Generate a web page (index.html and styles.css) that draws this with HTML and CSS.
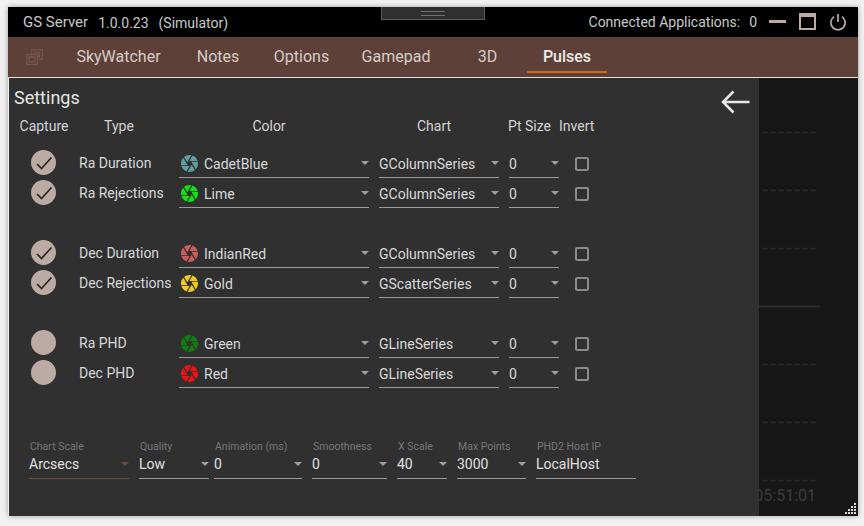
FILE: index.html
```html
<!DOCTYPE html>
<html lang="en">
<head>
  <meta charset="UTF-8">
  <title>GS Server</title>
  <link rel="stylesheet" href="styles.css">
</head>
<body>
  <svg class="defs" width="0" height="0">
    <symbol id="iris" viewBox="2 2 20 20">
      <path d="M13.73,15L9.83,21.76C10.53,21.91 11.25,22 12,22C14.4,22 16.6,21.15 18.32,19.75L14.66,13.4M2.46,15C3.38,17.92 5.61,20.26 8.45,21.34L12.12,15M8.54,12L4.64,5.25C3,7 2,9.39 2,12C2,12.68 2.07,13.35 2.2,14H9.69M21.8,10H14.31L14.6,10.5L19.36,18.75C21,16.97 22,14.6 22,12C22,11.31 21.93,10.64 21.8,10M21.54,9C20.62,6.07 18.39,3.74 15.55,2.66L11.88,9M9.4,10.5L14.17,2.24C13.47,2.09 12.75,2 12,2C9.6,2 7.4,2.84 5.68,4.25L9.34,10.6L9.4,10.5Z"/>
    </symbol>
    <symbol id="check" viewBox="0 0 24 24">
      <path d="M5 13l4.5 4.5L19.5 6.5" fill="none" stroke="#2b2624" stroke-width="1.7"/>
    </symbol>
  </svg>

  <div class="window">
    <header class="titlebar">
      <span class="app-name">GS Server</span>
      <span class="app-version">1.0.0.23</span>
      <span class="app-mode">(Simulator)</span>
      <div class="titlebar-right">
        <span>Connected Applications:</span>
        <span class="app-count">0</span>
        <span class="win-min"></span>
        <span class="win-max"></span>
        <svg class="win-power" width="18" height="18" viewBox="0 0 18 18">
          <path d="M9 1v8" stroke="#bcaaa4" stroke-width="1.7" fill="none"/>
          <path d="M5 3.6a7.2 7.2 0 1 0 8 0" stroke="#bcaaa4" stroke-width="1.7" fill="none"/>
        </svg>
      </div>
      <div class="drag-handle"><span></span></div>
    </header>

    <nav class="tabs">
      <svg class="tab-icon" width="17" height="16" viewBox="0 0 17 16">
        <path d="M5.5 5V.7h10.8v9.6H11.5M8 3.3h5.5v4.5H11.5M.7 5.5h10.8v9.8H.7zM3.2 8h5.800v4.800H3.2z" fill="none" stroke="#77544a" stroke-width="1.3"/>
      </svg>
      <a class="tab tab-sky">SkyWatcher</a>
      <a class="tab tab-notes">Notes</a>
      <a class="tab tab-options">Options</a>
      <a class="tab tab-gamepad">Gamepad</a>
      <a class="tab tab-3d">3D</a>
      <a class="tab tab-pulses active">Pulses</a>
    </nav>

    <div class="content">
      <main class="panel">
        <div class="panel-title">
          <h1>Settings</h1>
          <svg class="back" width="29" height="24" viewBox="0 0 29 24">
            <path d="M28.500 12H2.500M12.500 1.500L2 12l10.500 10.500" fill="none" stroke="#e8e8e8" stroke-width="2.500"/>
          </svg>
        </div>

        <div class="col-heads">
          <span>Capture</span>
          <span>Type</span>
          <span>Color</span>
          <span>Chart</span>
          <span class="head-pt">Pt Size</span>
          <span class="head-invert">Invert</span>
        </div>

        <div class="series-group">
          <div class="series-row">
            <span class="toggle on"><svg width="24" height="24"><use href="#check"/></svg></span>
            <span class="series-name">Ra Duration</span>
            <div class="field"><svg class="iris c-cadet" width="17" height="17"><use href="#iris"/></svg>CadetBlue<i></i></div>
            <div class="field">GColumnSeries<i></i></div>
            <div class="field">0<i></i></div>
            <span class="box"></span>
          </div>
          <div class="series-row">
            <span class="toggle on"><svg width="24" height="24"><use href="#check"/></svg></span>
            <span class="series-name">Ra Rejections</span>
            <div class="field"><svg class="iris c-lime" width="17" height="17"><use href="#iris"/></svg>Lime<i></i></div>
            <div class="field">GColumnSeries<i></i></div>
            <div class="field">0<i></i></div>
            <span class="box"></span>
          </div>
        </div>

        <div class="series-group">
          <div class="series-row">
            <span class="toggle on"><svg width="24" height="24"><use href="#check"/></svg></span>
            <span class="series-name">Dec Duration</span>
            <div class="field"><svg class="iris c-indian" width="17" height="17"><use href="#iris"/></svg>IndianRed<i></i></div>
            <div class="field">GColumnSeries<i></i></div>
            <div class="field">0<i></i></div>
            <span class="box"></span>
          </div>
          <div class="series-row">
            <span class="toggle on"><svg width="24" height="24"><use href="#check"/></svg></span>
            <span class="series-name">Dec Rejections</span>
            <div class="field"><svg class="iris c-gold" width="17" height="17"><use href="#iris"/></svg>Gold<i></i></div>
            <div class="field">GScatterSeries<i></i></div>
            <div class="field">0<i></i></div>
            <span class="box"></span>
          </div>
        </div>

        <div class="series-group">
          <div class="series-row">
            <span class="toggle"></span>
            <span class="series-name">Ra PHD</span>
            <div class="field"><svg class="iris c-green" width="17" height="17"><use href="#iris"/></svg>Green<i></i></div>
            <div class="field">GLineSeries<i></i></div>
            <div class="field">0<i></i></div>
            <span class="box"></span>
          </div>
          <div class="series-row">
            <span class="toggle"></span>
            <span class="series-name">Dec PHD</span>
            <div class="field"><svg class="iris c-red" width="17" height="17"><use href="#iris"/></svg>Red<i></i></div>
            <div class="field">GLineSeries<i></i></div>
            <div class="field">0<i></i></div>
            <span class="box"></span>
          </div>
        </div>

        <div class="options">
          <div class="opt opt-scale focus"><label>Chart Scale</label><div class="field">Arcsecs<i></i></div></div>
          <div class="opt opt-quality"><label>Quality</label><div class="field">Low<i></i></div></div>
          <div class="opt opt-anim"><label>Animation (ms)</label><div class="field">0<i></i></div></div>
          <div class="opt opt-smooth"><label>Smoothness</label><div class="field">0<i></i></div></div>
          <div class="opt opt-xscale"><label>X Scale</label><div class="field">40<i></i></div></div>
          <div class="opt opt-points"><label>Max Points</label><div class="field">3000<i></i></div></div>
          <div class="opt opt-host"><label>PHD2 Host IP</label><div class="field">LocalHost</div></div>
        </div>
      </main>

      <aside class="chart">
        <svg width="98" height="438" viewBox="0 0 98 438">
          <g stroke="#282828" stroke-width="1.500" stroke-dasharray="5 3">
            <path d="M4 54.500H58"/>
            <path d="M4 112.500H58"/>
            <path d="M4 170.500H58"/>
            <path d="M4 286.500H58"/>
            <path d="M4 344.500H58"/>
            <path d="M4 402.500H58"/>
          </g>
          <path d="M0 228.500H61" stroke="#303030" stroke-width="1.500"/>
          <text x="57" y="423" text-anchor="end" class="chart-time">05:51:01</text>
        </svg>
        <svg class="grip" width="12" height="12" viewBox="0 0 12 12" fill="#d8d8d8">
          <path d="M9 0h2v2H9zM6 3h2v2H6zM9 3h2v2H9zM3 6h2v2H3zM6 6h2v2H6zM9 6h2v2H9zM0 9h2v2H0zM3 9h2v2H3zM6 9h2v2H6zM9 9h2v2H9z"/>
        </svg>
      </aside>
    </div>
  </div>
</body>
</html>
```

FILE: styles.css
```css
html, body {
  margin: 0;
  height: 100%;
}

body {
  box-sizing: border-box;
  padding: 7px 6px 10px 8px;
  background: #f1f1f1;
  font-family: Roboto, "Noto Sans", sans-serif;
  font-size: 14px;
  color: #dcdcdc;
  overflow: hidden;
}

.defs {
  position: absolute;
}

.window {
  display: flex;
  flex-direction: column;
  height: 100%;
  box-shadow: 0 0 5px rgba(0, 0, 0, 0.35);
}

/* title bar */

.titlebar {
  position: relative;
  display: flex;
  align-items: center;
  height: 30px;
  padding: 0 11px 0 15px;
  background: #000;
  color: #c8c8c8;
  flex: none;
}

.app-name {
  margin-right: 10px;
  margin-top: -1px;
  font-size: 15px;
}

.app-version {
  margin-right: 10px;
  margin-top: 2px;
}

.app-mode {
  margin-top: 2px;
}

.titlebar-right {
  display: flex;
  align-items: center;
  margin-left: auto;
  margin-top: -1px;
}

.app-count {
  margin-left: 9px;
}

.win-min {
  width: 17px;
  height: 3px;
  margin-left: 12px;
  background: #bcaaa4;
}

.win-max {
  box-sizing: border-box;
  width: 17px;
  height: 17px;
  margin-left: 13px;
  border: 2px solid #bcaaa4;
  border-top-width: 4px;
}

.win-power {
  margin-left: 13px;
}

.drag-handle {
  position: absolute;
  top: 0;
  left: 373px;
  box-sizing: border-box;
  display: flex;
  justify-content: center;
  width: 104px;
  height: 13px;
  background: #2f2f2f;
  border: 1px solid #5a5a5a;
  border-top: 0;
}

.drag-handle span {
  width: 24px;
  height: 3px;
  margin-top: 4px;
  border-top: 1px solid #707070;
  border-bottom: 1px solid #707070;
}

/* tabs */

.tabs {
  display: flex;
  align-items: stretch;
  height: 40px;
  background: #5d4037;
  border-bottom: 1px solid #e6e0dd;
  flex: none;
}

.tab-icon {
  align-self: center;
  margin-left: 18px;
}

.tab {
  display: flex;
  align-items: center;
  justify-content: center;
  box-sizing: border-box;
  padding-top: 5px;
  font-size: 16px;
  font-weight: 400;
  color: #d7ccc8;
  border-bottom: 2px solid transparent;
  margin-bottom: 4px;
}

.tab-sky { width: 117px; margin-left: 17px; }
.tab-notes { width: 74px; margin-left: 4px; }
.tab-options { width: 87px; margin-left: 3px; }
.tab-gamepad { width: 102px; }
.tab-3d { width: 51px; margin-left: 15px; }
.tab-pulses { width: 80px; margin-left: 14px; }

.tab.active {
  color: #efebe9;
  font-weight: 500;
  border-bottom-color: #d2691e;
}

/* content */

.content {
  display: flex;
  flex: 1;
  min-height: 0;
  margin-left: 1px;
}

.panel {
  box-sizing: border-box;
  width: 750px;
  padding: 9px 9px 0 5px;
  background: #303030;
  flex: none;
}

.panel-title {
  display: flex;
  justify-content: space-between;
  align-items: flex-start;
  height: 31px;
}

.panel-title h1 {
  margin: 0;
  font-size: 18px;
  font-weight: 400;
  line-height: 22px;
  color: #e4e4e4;
}

.back {
  margin-top: 3px;
}

.col-heads {
  display: grid;
  grid-template-columns: 60px 90px 210px 120px 65px 42px;
  height: 31px;
  text-align: center;
  line-height: 16px;
  color: #d4d4d4;
}

.head-pt {
  text-align: left;
  padding-left: 14px;
  white-space: nowrap;
}

.head-invert {
  text-align: left;
}

.series-group + .series-group {
  margin-top: 30px;
}

.series-row {
  display: grid;
  grid-template-columns: 55px 90px 190px 120px 50px 20px;
  column-gap: 10px;
  align-items: start;
  height: 30px;
}

.toggle {
  display: flex;
  align-items: center;
  justify-content: center;
  width: 25px;
  height: 25px;
  margin: 1px 0 0 17px;
  border-radius: 50%;
  background: #bcaaa4;
}

.series-name {
  line-height: 28px;
  white-space: nowrap;
  color: #d8d8d8;
}

.field {
  position: relative;
  display: flex;
  align-items: center;
  box-sizing: border-box;
  height: 29px;
  padding-top: 1px;
  border-bottom: 1px solid #9a9a9a;
  white-space: nowrap;
  color: #d8d8d8;
}

.field i {
  position: absolute;
  right: 0;
  top: 12px;
  border-left: 4px solid transparent;
  border-right: 4px solid transparent;
  border-top: 4px solid #9e9e9e;
}

.iris {
  margin: 0 6px 0 2px;
  flex: none;
}

.c-cadet { fill: #5f9ea0; }
.c-lime { fill: #12e212; }
.c-indian { fill: #cd5c5c; }
.c-gold { fill: #f2cb16; }
.c-green { fill: #0f800f; }
.c-red { fill: #ee1212; }

.box {
  box-sizing: border-box;
  width: 14px;
  height: 14px;
  margin: 8px 0 0 6px;
  border: 2px solid #8a8a8a;
  border-radius: 2px;
}

/* bottom options */

.options {
  display: flex;
  margin-top: 51px;
  margin-left: 15px;
}

.opt {
  margin-right: 10px;
  flex: none;
}

.opt label {
  display: block;
  height: 14px;
  padding-left: 1px;
  font-size: 10.5px;
  line-height: 14px;
  color: #777;
  white-space: nowrap;
}

.opt .field {
  height: 25px;
  padding: 0 0 5px;
  color: #e0e0e0;
}

.opt .field i {
  top: 8px;
}

.opt-scale { width: 100px; }
.opt-quality { width: 70px; margin-right: 5px; }
.opt-anim { width: 88px; }
.opt-smooth { width: 75px; }
.opt-xscale { width: 50px; }
.opt-points { width: 69px; }
.opt-host { width: 100px; }

.focus .field {
  border-bottom-color: #6d4c41;
}

.focus .field i {
  border-top-color: #6d4c41;
}

/* chart behind the panel */

.chart {
  position: relative;
  flex: 1;
  background: #171717;
  overflow: hidden;
}

.chart-time {
  font-family: Roboto, sans-serif;
  font-size: 16px;
  fill: #3c3c3c;
}

.grip {
  position: absolute;
  right: 1px;
  bottom: 1px;
}
```
